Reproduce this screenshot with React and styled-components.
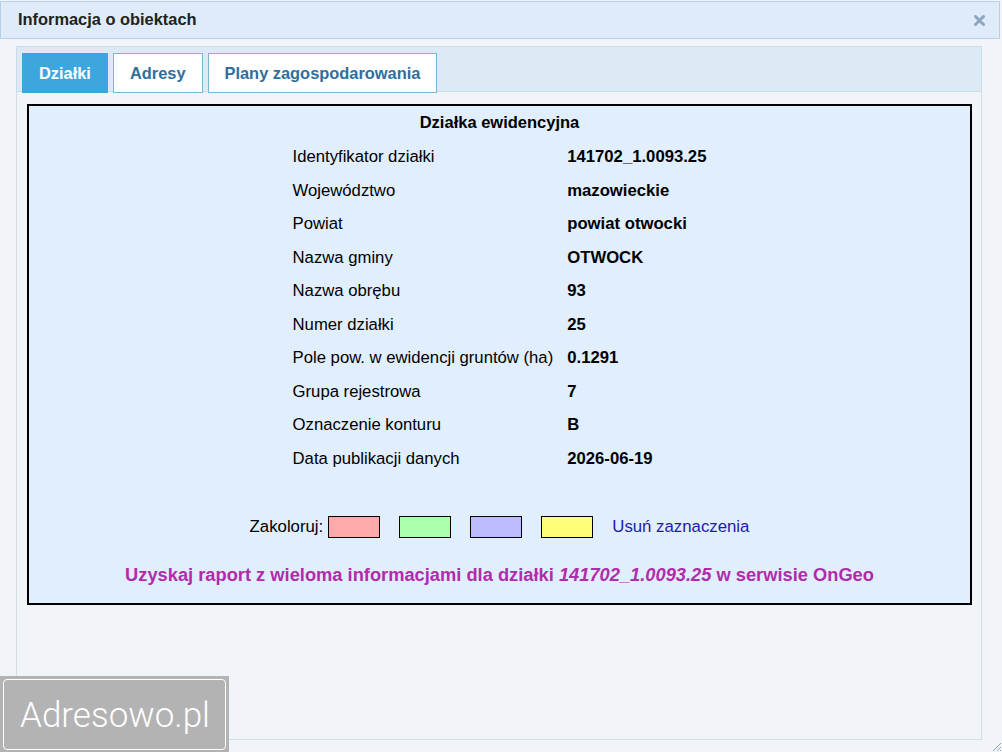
import React from "react";
import styled, { createGlobalStyle } from "styled-components";

const GlobalStyle = createGlobalStyle`
  html, body {
    margin: 0;
    padding: 0;
    background: #f1f5f9;
    font-family: "Liberation Sans", Arial, sans-serif;
  }
`;

const rows = [
  ["Identyfikator działki", "141702_1.0093.25"],
  ["Województwo", "mazowieckie"],
  ["Powiat", "powiat otwocki"],
  ["Nazwa gminy", "OTWOCK"],
  ["Nazwa obrębu", "93"],
  ["Numer działki", "25"],
  ["Pole pow. w ewidencji gruntów (ha)", "0.1291"],
  ["Grupa rejestrowa", "7"],
  ["Oznaczenie konturu", "B"],
  ["Data publikacji danych", "2026-06-19"],
];

const swatches = ["#ffaaaa", "#aaffaa", "#bbbbff", "#ffff77"];

function App() {
  return (
    <Dialog>
      <GlobalStyle />
      <TitleBar>
        <Title>Informacja o obiektach</Title>
        <CloseButton aria-label="close">
          <svg width="11" height="11" viewBox="0 0 11 11">
            <path d="M1.5 1.5 L9.5 9.5 M9.5 1.5 L1.5 9.5" stroke="#8ca7c1" strokeWidth="3" strokeLinecap="round" />
          </svg>
        </CloseButton>
      </TitleBar>

      <Body>
        <Tabs>
          <TabNav>
            <Tab $active>Działki</Tab>
            <Tab>Adresy</Tab>
            <Tab>Plany zagospodarowania</Tab>
          </TabNav>

          <TabPanel>
            <InfoBox>
              <Heading>Działka ewidencyjna</Heading>
              <DataTable>
                <tbody>
                  {rows.map(([label, value]) => (
                    <tr key={label}>
                      <Label>{label}</Label>
                      <Value>{value}</Value>
                    </tr>
                  ))}
                </tbody>
              </DataTable>

              <ColorRow>
                <span>Zakoloruj:</span>
                {swatches.map((c) => (
                  <Swatch key={c} $color={c} />
                ))}
                <ClearLink href="#">Usuń zaznaczenia</ClearLink>
              </ColorRow>

              <ReportLine href="#">
                Uzyskaj raport z wieloma informacjami dla działki <em>141702_1.0093.25</em> w serwisie OnGeo
              </ReportLine>
            </InfoBox>
          </TabPanel>
        </Tabs>
      </Body>

      <Watermark>
        <WatermarkInner>Adresowo.pl</WatermarkInner>
      </Watermark>

      <ResizeHandle width="12" height="12" viewBox="0 0 12 12">
        <path d="M11 3 L3 11 M11 7 L7 11 M11 10 L10 11" stroke="#8ca7c1" strokeWidth="1" />
      </ResizeHandle>
    </Dialog>
  );
}

const Dialog = styled.div`
  position: relative;
  width: 1002px;
  height: 752px;
  overflow: hidden;
  background: #f1f5f9;
`;

const TitleBar = styled.div`
  display: flex;
  align-items: center;
  justify-content: space-between;
  box-sizing: border-box;
  height: 38px;
  margin: 1px 2px 0 0;
  padding: 0 14px 0 17px;
  background: #dfebf8;
  border: 1px solid #b6d0ea;
`;

const Title = styled.div`
  font-size: 16.4px;
  font-weight: bold;
  color: #222;
  margin-top: -1px;
`;

const CloseButton = styled.div`
  display: flex;
  align-items: center;
  margin-top: 1px;
`;

const Body = styled.div`
  padding: 7px 20px 0 16px;
`;

const Tabs = styled.div`
  box-sizing: border-box;
  height: 694px;
  border: 1px solid #d5dee7;
  border-top: none;
  background: #f1f5f9;
`;

const TabNav = styled.div`
  display: flex;
  gap: 5px;
  box-sizing: border-box;
  height: 46px;
  padding: 6px 5px 0;
  background: #dde9f5;
  border: 1px solid #c8dcee;
  margin: 0 -1px;
`;

const Tab = styled.div`
  display: flex;
  align-items: center;
  box-sizing: border-box;
  height: 40px;
  padding: 0 16px;
  font-size: 16.4px;
  font-weight: bold;
  color: ${(p) => (p.$active ? "#ffffff" : "#2e6f9e")};
  background: ${(p) => (p.$active ? "#3da6de" : "#ffffff")};
  border: 1px solid ${(p) => (p.$active ? "#3da6de" : "#7ab6d8")};
`;

const TabPanel = styled.div`
  padding: 12px 9px 0 10px;
`;

const InfoBox = styled.div`
  display: flex;
  flex-direction: column;
  align-items: center;
  height: 501px;
  box-sizing: border-box;
  border: 2px solid #000;
  background: #e0eefe;
  color: #000;
`;

const Heading = styled.div`
  margin-top: 8px;
  line-height: 17px;
  font-size: 16.5px;
  font-weight: bold;
`;

const DataTable = styled.table`
  margin-top: 9px;
  border-collapse: collapse;
  font-size: 16.7px;
`;

const Label = styled.td`
  padding: 7px 7px;
  line-height: 19.5px;
  text-align: left;
`;

const Value = styled.td`
  padding: 7px 7px;
  line-height: 19.5px;
  font-weight: bold;
  text-align: left;
`;

const ColorRow = styled.div`
  display: flex;
  align-items: center;
  gap: 19px;
  margin-top: 40px;
  height: 24px;
  font-size: 16.8px;

  & > span {
    margin-right: -14px;
  }
`;

const Swatch = styled.div`
  box-sizing: border-box;
  width: 52px;
  height: 22px;
  border: 1px solid #000;
  background: ${(p) => p.$color};
`;

const ClearLink = styled.a`
  color: #1c1caa;
  text-decoration: none;
`;

const ReportLine = styled.a`
  margin-top: 25px;
  line-height: 22px;
  font-size: 18.3px;
  font-weight: bold;
  color: #b22bab;
  text-decoration: none;

  em {
    font-style: italic;
  }
`;

const Watermark = styled.div`
  position: absolute;
  left: 0;
  top: 676px;
  box-sizing: border-box;
  width: 229px;
  height: 76px;
  padding: 3px 3px 2px 3px;
  background: #b3b3b3;
`;

const WatermarkInner = styled.div`
  display: flex;
  align-items: center;
  box-sizing: border-box;
  height: 100%;
  padding-left: 16px;
  padding-top: 2px;
  border: 1.5px solid #ffffff;
  border-radius: 4px;
  font-family: Roboto, "Liberation Sans", sans-serif;
  font-weight: 300;
  font-size: 35px;
  color: #ffffff;
`;

const ResizeHandle = styled.svg`
  position: absolute;
  right: 0;
  bottom: 0;
`;

export default App;
